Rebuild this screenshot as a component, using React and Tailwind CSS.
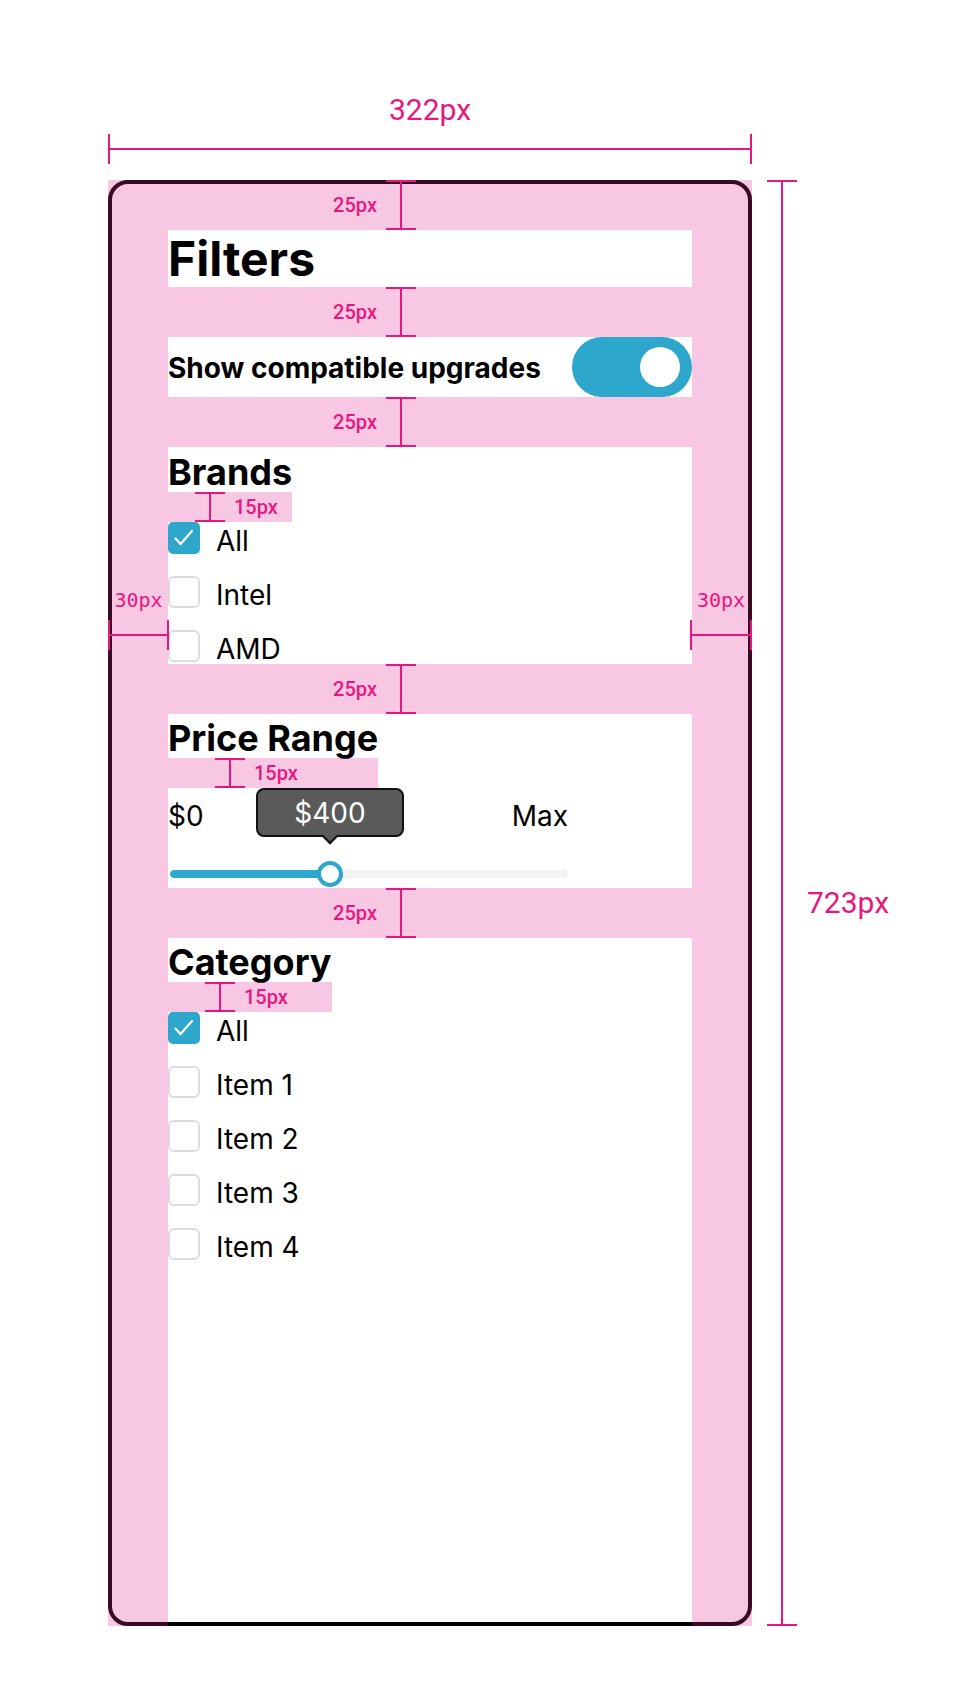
import React from "react";

const UI = { fontFamily: "Inter, 'Noto Sans', sans-serif" };
const NOTE = { fontFamily: "Roboto, 'Liberation Sans', sans-serif" };
const MONO = { fontFamily: "'DejaVu Sans Mono', 'Liberation Mono', monospace" };

function IBeamV() {
  return (
    <div className="w-[30px] h-full flex flex-col items-center shrink-0">
      <div className="h-[2px] w-full bg-[#e8177f]" />
      <div className="w-[2px] flex-1 bg-[#e8177f]" />
      <div className="h-[2px] w-full bg-[#e8177f]" />
    </div>
  );
}

function GapNote({ className = "" }) {
  return (
    <div className={`h-[50px] shrink-0 flex ${className}`}>
      <div className="w-[218px] flex items-center justify-end pr-[9px]">
        <span style={NOTE} className="text-[20px] leading-[24px] font-medium text-[#e8177f]">
          25px
        </span>
      </div>
      <IBeamV />
    </div>
  );
}

function Heading({ title, spacer }) {
  return (
    <div className="w-fit">
      <h2 className="relative top-[2px] text-[36px] leading-[44px] font-bold whitespace-nowrap">{title}</h2>
      <div className="h-[30px] bg-[#f7c7e3] flex">
        <div style={{ width: spacer }} />
        <IBeamV />
        <div className="flex items-center pl-[9px]">
          <span style={NOTE} className="text-[20px] leading-[24px] font-medium text-[#e8177f]">
            15px
          </span>
        </div>
      </div>
    </div>
  );
}

function Check({ checked, label }) {
  return (
    <div className="flex items-center h-[32px]">
      {checked ? (
        <div className="w-[32px] h-[32px] rounded-[5px] bg-[#2ea7cc] flex items-center justify-center">
          <svg width="32" height="32" viewBox="0 0 32 32" fill="none">
            <polyline
              points="7.5,16.5 12.5,22 24,9"
              stroke="white"
              strokeWidth="2.2"
              strokeLinecap="round"
              strokeLinejoin="round"
            />
          </svg>
        </div>
      ) : (
        <div className="w-[32px] h-[32px] rounded-[6px] border-2 border-[#dcdcdc]" />
      )}
      <span className="ml-[16px] relative top-[3px] text-[28px] leading-[32px]">{label}</span>
    </div>
  );
}

function PriceSlider() {
  return (
    <div className="w-[400px]">
      <div className="relative h-[56px] flex items-center justify-between text-[28px] leading-[34px]">
        <span>$0</span>
        <span>Max</span>
        <div className="absolute top-0 left-[88px] w-[148px] h-[49px] rounded-[8px] border-2 border-[#111] bg-[#5a5a5a] flex items-center justify-center">
          <span className="text-white text-[28px] leading-[34px]">$400</span>
          <div className="absolute left-[66px] top-[40px] w-[12px] h-[12px] rotate-45 bg-[#5a5a5a] border-r-2 border-b-2 border-[#111]" />
        </div>
      </div>
      <div className="mt-[17px] h-[26px] relative flex items-center">
        <div className="ml-[2px] w-[398px] h-[8px] rounded-full bg-[#f2f2f2] overflow-hidden">
          <div className="h-full w-[160px] bg-[#2ea7cc] rounded-full" />
        </div>
        <div className="absolute left-[149px] top-0 w-[26px] h-[26px] rounded-full border-4 border-[#2ea7cc] bg-white" />
      </div>
    </div>
  );
}

export default function App() {
  return (
    <div style={UI} className="w-[956px] h-[1708px] bg-white text-black">
      <div className="pl-[108px] pt-[93px]">
        <div className="w-[644px]">
          <div style={NOTE} className="text-center text-[30px] leading-[34px] text-[#e8177f]">
            322px
          </div>
          <div className="mt-[7px] h-[30px] flex items-center">
            <div className="w-[2px] h-full bg-[#e8177f]" />
            <div className="flex-1 h-[2px] bg-[#e8177f]" />
            <div className="w-[2px] h-full bg-[#e8177f]" />
          </div>
        </div>

        <div className="mt-[16px] flex items-center">
          <div className="w-[644px] h-[1446px] bg-[#f7c7e3] relative shrink-0">
            <div className="h-full rounded-[20px] border-4 border-[#3a0a25] px-[56px] flex flex-col">
              <GapNote className="-mt-1" />
              <div className="h-[57px] bg-white">
                <h1 className="text-[48px] leading-[57px] font-bold">Filters</h1>
              </div>
              <GapNote />
              <div className="h-[60px] bg-white flex items-center justify-between">
                <span className="text-[28px] font-bold leading-[34px] relative top-[1px]">Show compatible upgrades</span>
                <div className="w-[120px] h-[60px] rounded-full bg-[#2ea7cc] flex items-center justify-end pr-[12px]">
                  <div className="w-[40px] h-[40px] rounded-full bg-white" />
                </div>
              </div>
              <GapNote />
              <div className="bg-white pt-[1px] pb-[2px]">
                <Heading title="Brands" spacer={27} />
                <div className="flex flex-col gap-[22px]">
                  <Check checked label="All" />
                  <Check label="Intel" />
                  <Check label="AMD" />
                </div>
              </div>
              <GapNote />
              <div className="bg-white pb-[1px]">
                <Heading title="Price Range" spacer={47} />
                <PriceSlider />
              </div>
              <GapNote />
              <div className="flex-1 bg-white -mb-1 border-b-4 border-black">
                <Heading title="Category" spacer={37} />
                <div className="flex flex-col gap-[22px]">
                  <Check checked label="All" />
                  <Check label="Item 1" />
                  <Check label="Item 2" />
                  <Check label="Item 3" />
                  <Check label="Item 4" />
                </div>
              </div>
            </div>

            <div className="absolute left-0 top-[408px] w-[61px] text-center">
              <span style={MONO} className="text-[20px] leading-[24px] text-[#e8177f]">30px</span>
            </div>
            <div className="absolute left-0 top-[440px] w-[61px] h-[30px] flex items-center">
              <div className="w-[2px] h-full bg-[#e8177f]" />
              <div className="flex-1 h-[2px] bg-[#e8177f]" />
              <div className="w-[2px] h-full bg-[#e8177f]" />
            </div>
            <div className="absolute left-[582px] top-[408px] w-[62px] text-center">
              <span style={MONO} className="text-[20px] leading-[24px] text-[#e8177f]">30px</span>
            </div>
            <div className="absolute left-[582px] top-[440px] w-[62px] h-[30px] flex items-center">
              <div className="w-[2px] h-full bg-[#e8177f]" />
              <div className="flex-1 h-[2px] bg-[#e8177f]" />
              <div className="w-[2px] h-full bg-[#e8177f]" />
            </div>
          </div>

          <div className="ml-[15px] h-[1446px]">
            <IBeamV />
          </div>
          <span style={NOTE} className="ml-[10px] text-[30px] leading-[34px] text-[#e8177f]">
            723px
          </span>
        </div>
      </div>
    </div>
  );
}
